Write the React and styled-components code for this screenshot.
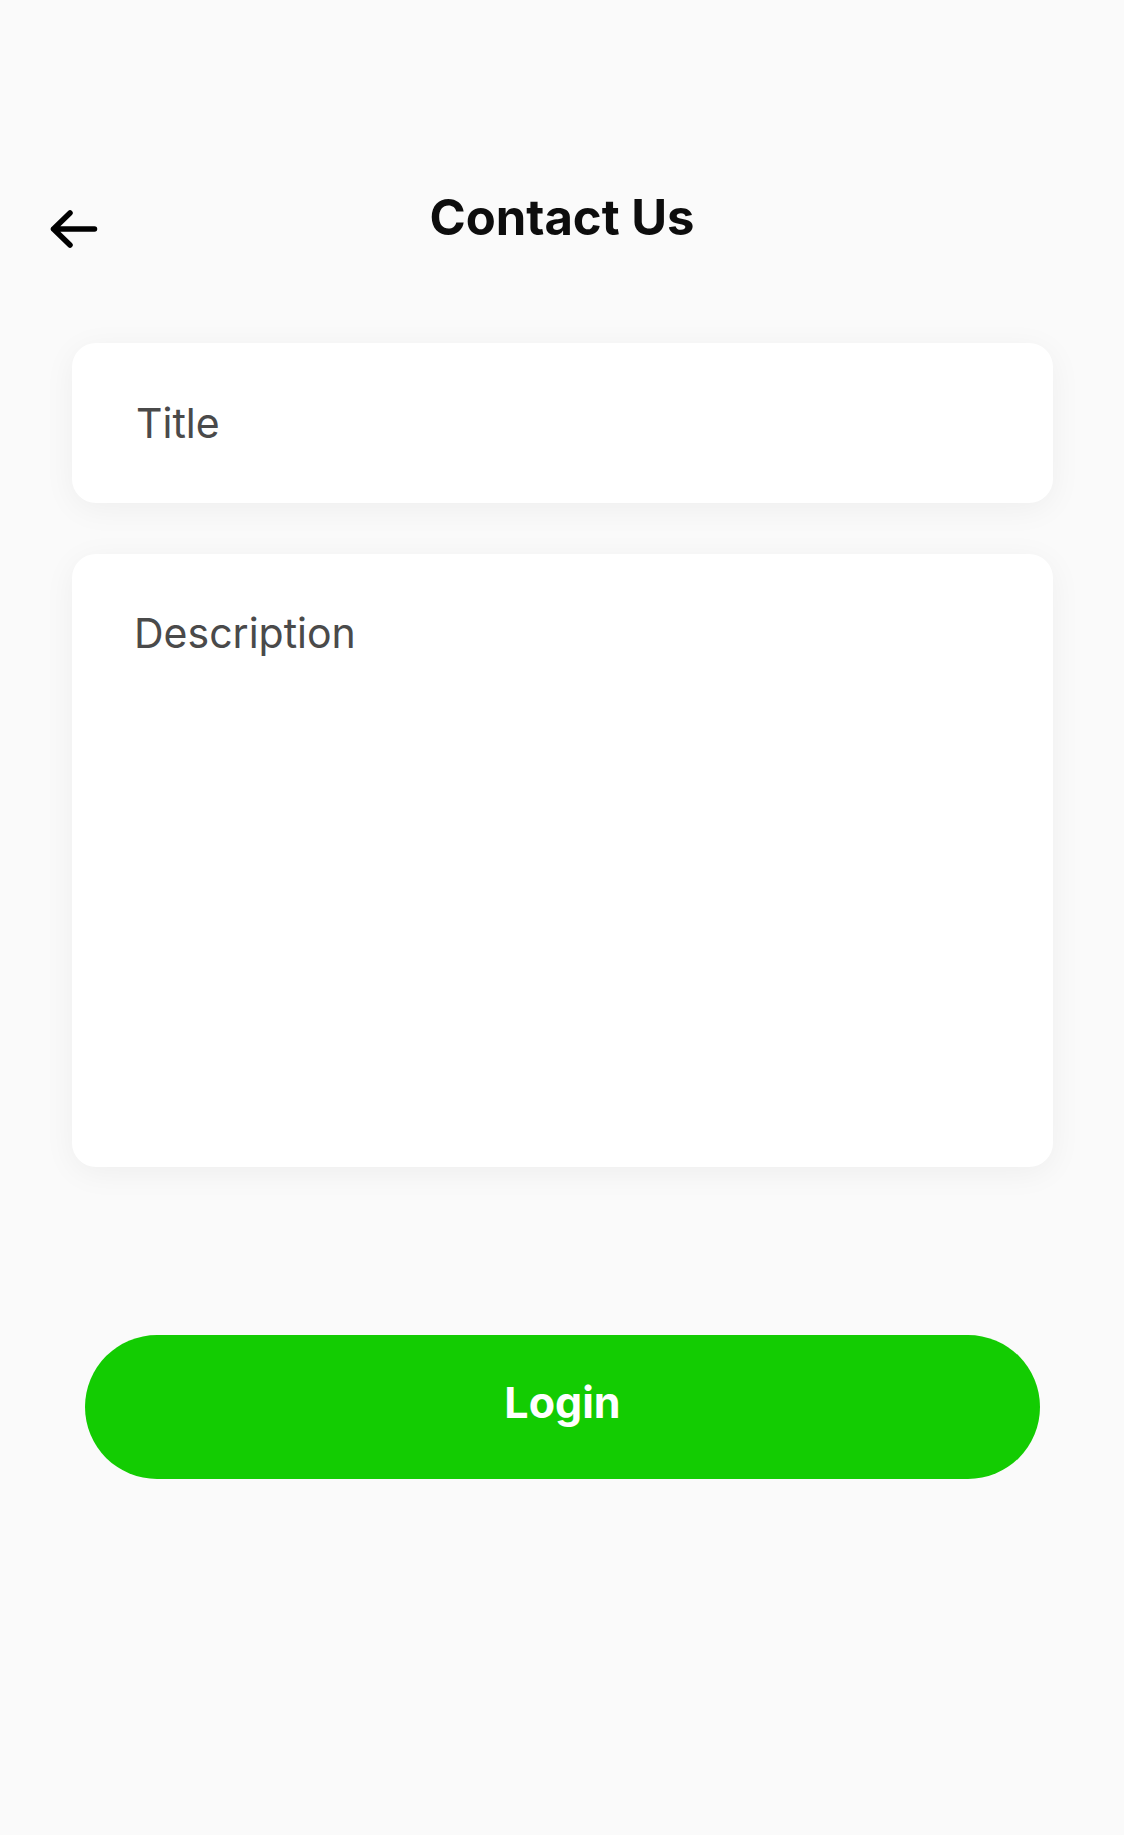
import styled, { createGlobalStyle } from "styled-components";

const GlobalStyle = createGlobalStyle`
  html, body {
    margin: 0;
    padding: 0;
    background: #fafafa;
  }
  * {
    box-sizing: border-box;
  }
`;

function ContactUs() {
  return (
    <Page>
      <GlobalStyle />
      <Header>
        <BackButton aria-label="Back">
          <svg width="52" height="40" viewBox="0 0 52 40" fill="none">
            <path
              d="M5.5 20H46.5M22 4L5.5 20L22 36"
              stroke="#000"
              strokeWidth="5.5"
              strokeLinecap="round"
              strokeLinejoin="round"
            />
          </svg>
        </BackButton>
        <Heading>Contact Us</Heading>
      </Header>

      <Form onSubmit={(e) => e.preventDefault()}>
        <Card height="160px">
          <TitleInput type="text" name="title" placeholder="Title" />
        </Card>
        <Card height="613px">
          <DescriptionInput name="description" placeholder="Description" />
        </Card>
        <SubmitBtn type="submit">Login</SubmitBtn>
      </Form>
    </Page>
  );
}

const Page = styled.div`
  min-height: 1835px;
  background: #fafafa;
  font-family: Inter, "Noto Sans", sans-serif;
  padding-top: 189px;
`;

const Header = styled.header`
  display: grid;
  grid-template-columns: 1fr auto 1fr;
  padding: 0 48px;
`;

const BackButton = styled.button`
  justify-self: start;
  align-self: start;
  margin-top: 20px;
  padding: 0;
  border: none;
  background: none;
  display: flex;
  cursor: pointer;
`;

const Heading = styled.h1`
  grid-column: 2;
  margin: 0;
  font-size: 49px;
  line-height: 58px;
  font-weight: 700;
  color: #0d0d0d;
`;

const Form = styled.form`
  display: flex;
  flex-direction: column;
  gap: 51px;
  padding: 94px 71px 0 72px;
`;

const Card = styled.div`
  display: flex;
  height: ${(p) => p.height};
  background: #fff;
  border-radius: 24px;
  box-shadow: 0 6px 32px rgba(0, 0, 0, 0.05);
  overflow: hidden;
`;

const fieldText = `
  border: none;
  outline: none;
  background: transparent;
  width: 100%;
  font-family: Inter, "Noto Sans", sans-serif;
  font-size: 41px;
  color: #333;
  &::placeholder {
    color: #4a4a4a;
    opacity: 1;
  }
`;

const TitleInput = styled.input`
  ${fieldText}
  height: 100%;
  padding: 0 64px;
  line-height: 50px;
`;

const DescriptionInput = styled.textarea`
  ${fieldText}
  height: 100%;
  resize: none;
  padding: 54px 62px;
  line-height: 50px;
`;

const SubmitBtn = styled.button`
  margin: 117px 13px 0 13px;
  height: 144px;
  padding: 0 0 11px;
  border: none;
  border-radius: 72px;
  background: #13cc02;
  color: #fff;
  font-family: Inter, "Noto Sans", sans-serif;
  font-size: 43px;
  font-weight: 700;
  cursor: pointer;
`;

export default ContactUs;
